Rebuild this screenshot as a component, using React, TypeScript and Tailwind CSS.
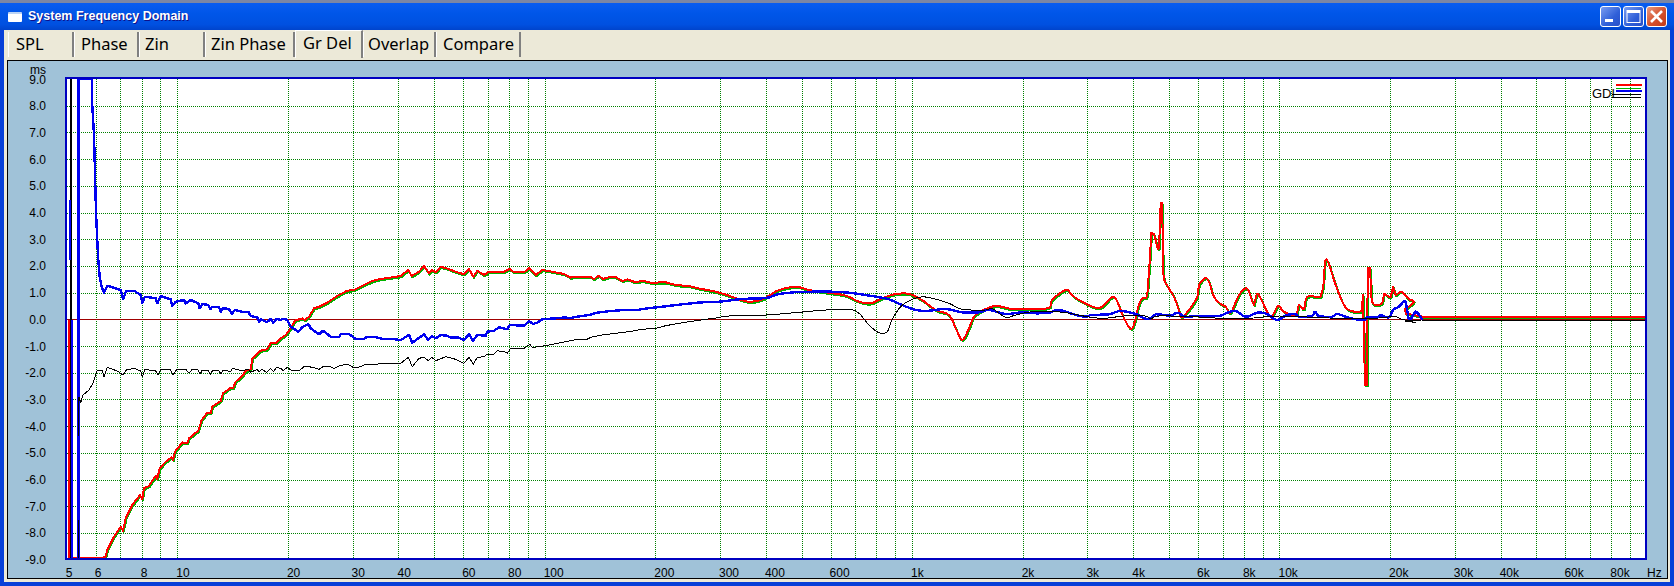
const TABS = [
  { label: 'SPL', cls: 'w-[66px] pl-[7px]' },
  { label: 'Phase', cls: 'w-[65px] pl-[6px]' },
  { label: 'Zin', cls: 'w-[66px] pl-[5px]' },
  { label: 'Zin Phase', cls: 'w-[90px] pl-[5px]' },
  { label: 'Gr Del', cls: 'w-[68px] pl-[7px]', active: true },
  { label: 'Overlap', cls: 'w-[73px] pl-[4px]' },
  { label: 'Compare', cls: 'w-[85px] pl-[6px]' },
]

const xAt = (f: number) => 178.3 + 367.4 * Math.log10(f / 10)
const yAt = (v: number) => 319.3 - 26.7 * v

const GRID_F = [
  6, 7, 8, 9, 10, 20, 30, 40, 50, 60, 70, 80, 90, 100, 200, 300, 400, 500, 600, 700, 800, 900, 1000, 2000, 3000, 4000,
  5000, 6000, 7000, 8000, 9000, 10000, 20000, 30000, 40000, 50000, 60000, 70000, 80000, 90000,
]
const GRID_V = [8, 7, 6, 5, 4, 3, 2, 1, -1, -2, -3, -4, -5, -6, -7, -8]
const LABEL_V = [9, 8, 7, 6, 5, 4, 3, 2, 1, 0, -1, -2, -3, -4, -5, -6, -7, -8, -9]
const LABEL_F: [number, string][] = [
  [5, '5'], [6, '6'], [8, '8'], [10, '10'], [20, '20'], [30, '30'], [40, '40'], [60, '60'], [80, '80'],
  [100, '100'], [200, '200'], [300, '300'], [400, '400'], [600, '600'], [1000, '1k'], [2000, '2k'], [3000, '3k'],
  [4000, '4k'], [6000, '6k'], [8000, '8k'], [10000, '10k'], [20000, '20k'], [30000, '30k'], [40000, '40k'],
  [60000, '60k'], [80000, '80k'],
]

// traced from the plot, page pixels
const RED =
  '72,558 102.7,558.3 106.7,556.7 108.3,550 115,536.7 121.7,526.7 124,530.7 126.7,518.3 133.3,505 141,495 143.3,499 145,488.3 150,486 156.7,475.7 158.3,479 160.7,468.3 166.7,461.7 172.7,457.3 174,460 176,451.7 183.3,442.3 188.3,443.3 190,438.3 199.3,430.7 202.7,420 208.3,412.7 211.7,413.3 213.3,406.7 221.7,401 224,393.3 231.7,387.7 234,388.3 236.7,381.7 243.3,376 246.7,371 251.7,369.3 253.3,358.3 261.7,350.7 268.3,349.3 271.7,343.3 277.3,343.3 280.7,339 286.7,335 291.7,328.3 296,320.7 303.3,318.3 306,320 310,316.7 315,308.3 320,306.7 328.3,302.7 333.3,299.3 340,295 348.3,290.7 355,290 365,285 373.3,281 380,279.3 393.3,277.3 401.7,276 409.3,270 412.7,276 420,271.7 425,266 430,273.3 432.7,270 436.7,272.3 441.7,266.7 447.3,268.3 456.7,271.7 465,274.3 470,269 474.3,276.7 478.3,270.7 485,275 490,271.7 495,272.3 505,271.7 510.7,269 515,272.3 525,272.3 530,268.3 536.7,275 543.3,270 553.3,271.7 565,274 571.7,277.7 575,276.7 591.7,276.7 595,279.3 599.3,275.7 604,279 611.7,276.7 617,277.3 623.3,281 628.3,279.3 636.7,282.3 643.3,280.7 651.7,282.7 666.7,282.3 676.7,285 690,286 700,288.5 716.7,291.7 730,295.7 740,299.3 750,301.7 761.7,300 770,295.7 780,290 796.7,286.7 810,290 826.7,292.3 846.7,295.7 860,301.7 871.7,303.3 883.3,298.3 896.7,294 910,294 923,300 936.7,310 950,315 956.7,328.3 963.3,340 970,328.3 975,316.7 983,310.7 996.7,306 1013,309 1033,309 1050,307.7 1053,300 1066.7,290 1073,295 1080,300 1095,307.3 1103.3,306.7 1113.3,296.7 1118.3,301.7 1125,318.3 1132.3,329 1136.7,318.3 1139.3,306.7 1143.3,298.3 1148.3,295 1150.7,261.7 1152.3,232.7 1155,234.3 1160,248.3 1161.7,203.3 1163.3,203.3 1164,271.7 1170,288.3 1175,296.7 1180,310 1184,316.7 1198.3,297.3 1200,285 1206,278.3 1210,281.7 1215,296.7 1221.7,304 1226.7,306.7 1231.7,312.7 1240,295 1246.7,288.3 1250,291.7 1255,305 1257.7,294 1261.7,298.3 1271.7,316.7 1279,306 1285,311.7 1296.7,315 1300,305 1305,309.3 1308.3,296.7 1321.7,296.7 1324.3,286.7 1326,262.3 1329.3,262.3 1336.7,285 1345,305 1351.7,310.7 1362.7,310.7 1364,295 1366,385 1368,385 1368.7,268.3 1371,268.3 1372.7,301.7 1383.3,303.3 1385,294 1391.7,297.3 1394,286.7 1396.7,295 1402.3,291.7 1410,299.3 1415,301.7 1424.3,316.7 1646,316.7'

const BLUE =
  '79.5,558 79.5,78.5 93,78.5 93.3,106 95,135 96,173 97,212 98,235 99.3,260 100.7,277 102.7,287 105,292.7 108.3,285.7 121.7,290 124,299.3 127.3,290.7 135,290.7 141.7,295 143.3,302.7 146,296.7 156.7,298.3 158.3,303.3 161.7,296 171.7,299.3 173.3,306 176.7,301.7 185,300 186.7,303.3 191.7,300 199.3,303.3 200.7,308.3 203.3,304 209.3,305 211.3,309.3 213.3,306.7 220,307.3 221.7,311.7 224,308.3 230,309 232.7,314 236,310 243.3,311.7 249.3,311.7 251.7,316 258.3,317.3 260,321.7 261.7,319 267.7,322.3 271.7,319 274.3,322.7 277.3,319 281.7,320 284,318.7 288.3,320 291.7,326.7 299.3,331.7 303.3,327.3 309.3,324 311.7,328.3 320,334.3 324,330.7 331.7,336.7 340,337.3 341.7,334 350,334 356.7,339 365,339 368.3,336.7 376.7,337.3 383.3,338.7 393.3,339 401.7,340 410,335 413.3,342.7 425,334.3 429.3,340 432.7,336 436.7,338.3 441.7,335 448.3,335.7 451.7,337.7 458.3,337.3 465,340 470,334.3 474,340.7 478.3,335 486.7,335.7 488.3,331.7 495,330.7 500,327.3 508.3,329.3 510.7,325 525,325.7 530,321 534,324 538.3,322.7 543.3,319.3 556.7,318.3 566.7,317.3 570,318.3 578.3,316.7 590,315 598.3,312.7 611.7,311 625,310 638.3,310 643.3,309 663.3,306.7 683.3,304.3 700,302.5 720,301.7 743,299 767,298 780,294 800,292 813,291.7 833,291.7 853,293 877,296.7 890,299.3 903,305 917,310 930,310.7 947,309 963,312.3 980,312.3 990,310 1007,314 1023,312.3 1037,313.3 1050,312.7 1060,310 1077,315 1087,316.7 1093,315 1110,314.3 1121.7,311 1136.7,314 1145,318.3 1151.7,318.3 1157.3,314.3 1171.7,315.7 1178.3,312.7 1186.7,316.7 1198,316 1220,316 1226.7,313.3 1236.7,311 1246.7,316.7 1258.3,312.7 1268,314 1278,320 1288,315 1296.7,314.3 1300,316.7 1313,316 1316,311.7 1320,316 1333,316.7 1338,314 1346.7,316.7 1356.7,319.3 1366.7,319.3 1368,317.3 1378,317.3 1381.7,315.3 1390,317.3 1394,310 1400,306.7 1406.7,301.7 1410,320.7 1416.7,311.7 1423.3,320'

const BLACK =
  '80,396.7 81.7,403 84,395 90,390 94,383.3 98.3,370 103,370 105,376.7 108.3,367.3 118.3,371 124,375 127.3,370 135,368.3 141.7,371 143.3,376.7 146,369.3 156.7,371 159,375 161.7,369.3 171.7,370 174,375 177.3,370 186.7,369.3 190,373.3 193.3,369.3 199.3,370 201,374.3 203.3,370 209.3,370.7 211.3,374.3 214,370 220,370.7 222,374 224.3,370 231.7,371.7 233.3,368.3 243.3,370.7 249.3,369.3 251.7,372.3 258.3,369.3 260,372.3 262.7,369.3 267.7,372.3 271.7,368.3 274.3,371.7 277.3,367.7 281.7,368.3 284.3,370.7 288.3,367.3 291.7,370 301,370 305,366.7 310,366.7 315,367.7 320,369.3 324,366.7 331.7,366.7 335,368.3 341.7,365.3 348.3,364.3 355,367.7 361.7,366.7 366.7,364.3 373.3,364 378.3,365 380,363.3 401.7,363.3 409.3,357.3 413.3,366.7 420,358.3 425,357.3 429.3,360.7 432.7,357.3 436.7,360.7 446.7,356.7 456.7,359.3 465,363.3 470,357.3 474.3,364.3 478.3,357.3 485,356.7 488.3,354.3 495,354 498.3,350.7 505,351.7 508.3,353.3 511.7,348.3 525,348.3 530.7,344.3 533.3,347.3 540,346.7 550,345 560,343 570,341 578.3,339.3 588,339.3 591.7,337.3 598.3,336 603,335 616.7,333.3 630,331.7 643.3,329.3 656.7,328.3 666.7,325.7 680,323.3 696.7,320.7 706.7,319.3 716.7,318 733,315.7 767,315 800,312.3 826.7,310 850,309.3 860,313.3 870,325 880,332.7 888.3,331.7 893,320 903.3,305 920,297.3 933,298.3 950,303.3 963,309.3 986.7,310 993,308.3 1006.7,317.3 1016.7,315 1033,311.7 1053,311.7 1067,312.7 1100,318.3 1125,316 1146,316 1152,319 1160,316 1200,317 1240,319 1280,316 1330,318 1380,318 1395,316 1402,319 1416.7,322.3 1423,320 1646,320'

// rounds off the humps above 700 Hz-ish pixels, spikes stay straight
function smooth(raw: string) {
  const pts = raw.split(' ').map((p) => p.split(',').map(Number))
  const out: number[][] = []
  for (let i = 0; i < pts.length - 1; i++) {
    const p1 = pts[i]
    const p2 = pts[i + 1]
    const p0 = pts[i - 1] ?? p1
    const p3 = pts[i + 2] ?? p2
    const dx = p2[0] - p1[0]
    out.push(p1)
    if (p1[0] < 700 || dx < 3 || dx > 60 || Math.abs((p2[1] - p1[1]) / dx) > 4) continue
    for (let k = 1; k < 4; k++) {
      const t = k / 4
      const h = (a: number, b: number, c: number, d: number) =>
        0.5 * (2 * b + (c - a) * t + (2 * a - 5 * b + 4 * c - d) * t * t + (3 * b - a - 3 * c + d) * t * t * t)
      out.push([h(p0[0], p1[0], p2[0], p3[0]), h(p0[1], p1[1], p2[1], p3[1])])
    }
  }
  out.push(pts[pts.length - 1])
  return out.map((p) => `${p[0].toFixed(1)},${p[1].toFixed(1)}`).join(' ')
}

const RED_LINE = smooth(RED)
const BLUE_LINE = smooth(BLUE)
const BLACK_LINE = smooth(BLACK)

function Chart() {
  return (
    <svg width={1658} height={517} viewBox="9 61 1658 517" className="block overflow-visible">
      <text x={47} y={74} textAnchor="end" fontSize={12} fontFamily="Liberation Sans, sans-serif" fill="#000">
        ms
      </text>
      {LABEL_V.map((v) => (
        <text
          key={v}
          x={47}
          y={yAt(v) + 4.5}
          textAnchor="end"
          fontSize={12}
          fontFamily="Liberation Sans, sans-serif"
          fill="#000"
        >
          {v.toFixed(1)}
        </text>
      ))}
      {LABEL_F.map(([f, label]) => (
        <text key={f} x={xAt(f) - 1} y={577} fontSize={12} fontFamily="Liberation Sans, sans-serif" fill="#000">
          {label}
        </text>
      ))}
      <text x={1648} y={577} fontSize={12} fontFamily="Liberation Sans, sans-serif" fill="#000">
        Hz
      </text>

      <rect x={67} y={78} width={1579.5} height={481} fill="#fff" />

      <g stroke="#008000" strokeWidth={1} strokeDasharray="1 1" shapeRendering="crispEdges">
        {GRID_F.map((f) => (
          <line key={f} x1={Math.round(xAt(f)) + 0.5} x2={Math.round(xAt(f)) + 0.5} y1={79} y2={558} />
        ))}
        {GRID_V.map((v) => (
          <line key={v} x1={68} x2={1646} y1={Math.round(yAt(v)) + 0.5} y2={Math.round(yAt(v)) + 0.5} />
        ))}
      </g>
      <line x1={68} x2={1646} y1={319.5} y2={319.5} stroke="#a00000" strokeWidth={1} shapeRendering="crispEdges" />

      <g fill="none" strokeLinejoin="round" shapeRendering="crispEdges">
        <polyline points={RED_LINE} stroke="#00b400" strokeWidth={2} transform="translate(0.7 1.2)" />
        <line x1={1369.5} x2={1369.5} y1={269} y2={385} stroke="#00b400" strokeWidth={1.5} />
        <line x1={70} x2={70} y1={320} y2={558} stroke="#ff0000" strokeWidth={2} />
        <polyline points={RED_LINE} stroke="#ff0000" strokeWidth={2} />
        <polyline points={BLUE_LINE} stroke="#0000f0" strokeWidth={2.4} />
        <line x1={71.5} x2={71.5} y1={79} y2={558} stroke="#000" strokeWidth={2} />
        <line x1={70.5} x2={70.5} y1={200} y2={260} stroke="#0000f0" strokeWidth={2} />
        <line x1={73} x2={73} y1={320} y2={558} stroke="#0000ff" strokeWidth={1.5} />
        <polyline points={BLACK_LINE} stroke="#000" strokeWidth={1} />
        <line x1={79.5} x2={79.5} y1={397} y2={436} stroke="#000" strokeWidth={1} />
        <line x1={79.5} x2={79.5} y1={520} y2={558} stroke="#000" strokeWidth={1} />
      </g>

      <rect x={67} y={78} width={1579.5} height={481} fill="none" stroke="#0000c0" strokeWidth={2} shapeRendering="crispEdges" />

      <text x={1593} y={98} fontSize={13} fontFamily="Liberation Sans, sans-serif" fill="#000">
        GDL
      </text>
      <g shapeRendering="crispEdges">
        <rect x={1617} y={84} width={26} height={2} fill="#ff0000" />
        <rect x={1617} y={88} width={25} height={1} fill="#00b400" />
        <rect x={1617} y={90} width={26} height={2} fill="#0000f0" />
        <rect x={1613} y={94} width={29} height={1} fill="#000" />
        <rect x={1613} y={97} width={29} height={1} fill="#000" />
      </g>
    </svg>
  )
}

function TitleButtons() {
  const base = 'flex h-[21px] w-[21px] items-center justify-center rounded-[3px] border border-white'
  return (
    <div className="flex gap-[2px]">
      <div className={`${base} bg-[linear-gradient(135deg,#7a9cf0,#2f5fd8_60%,#2a50c8)]`}>
        <svg width="19" height="19" viewBox="0 0 19 19">
          <rect x="4" y="12" width="8" height="3" fill="#fff" />
        </svg>
      </div>
      <div className={`${base} bg-[linear-gradient(135deg,#7a9cf0,#2f5fd8_60%,#2a50c8)]`}>
        <svg width="19" height="19" viewBox="0 0 19 19">
          <rect x="3" y="3.5" width="13" height="12" fill="none" stroke="#fff" />
          <rect x="3" y="3" width="13" height="3" fill="#fff" />
        </svg>
      </div>
      <div className={`${base} bg-[linear-gradient(135deg,#e89a80,#d4502c_55%,#c23a18)]`}>
        <svg width="19" height="19" viewBox="0 0 19 19">
          <path d="M4 4l11 11M15 4L4 15" stroke="#fff" strokeWidth="2.6" fill="none" />
        </svg>
      </div>
    </div>
  )
}

export default function App() {
  return (
    <div className="flex h-[586px] w-[1674px] flex-col overflow-hidden bg-[#0840d8]">
      <div className="h-[3px] bg-[#7c86a4]" />
      <div className="flex h-[27px] items-center justify-between bg-[linear-gradient(to_bottom,#0a5cf0,#0056e8_40%,#0050e0_80%,#0044cc)] pl-2 pr-[7px]">
        <div className="flex items-center gap-[6px]">
          <div className="h-[10px] w-[14px] rounded-[1px] border-t-[2px] border-[#bcd4f4] bg-white" />
          <span className="font-['Liberation_Sans',sans-serif] text-[12.5px] font-bold text-white [text-shadow:1px_1px_0_#0f1089]">
            System Frequency Domain
          </span>
        </div>
        <TitleButtons />
      </div>

      <div className="ml-1 mr-1 flex h-[552px] flex-col bg-[#ece9d8] pb-[3px] pl-[3px] pr-[2px]">
        <div className="flex h-[30px] items-end pl-[1px]">
          {TABS.map((tab) => (
            <div
              key={tab.label}
              className={`flex items-center border-l border-white font-['Noto_Sans',sans-serif] text-[16.5px] leading-none text-black ${tab.cls} ${
                tab.active
                  ? 'mb-[2px] h-[28px] border-r-2 border-t border-r-[#808080] border-t-white pb-[3px]'
                  : 'mb-[3px] h-[25px] border-r-2 border-r-[#808080]'
              }`}
            >
              {tab.label}
            </div>
          ))}
        </div>
        <div className="border border-black bg-[#a0c2d8]">
          <Chart />
        </div>
      </div>
    </div>
  )
}
